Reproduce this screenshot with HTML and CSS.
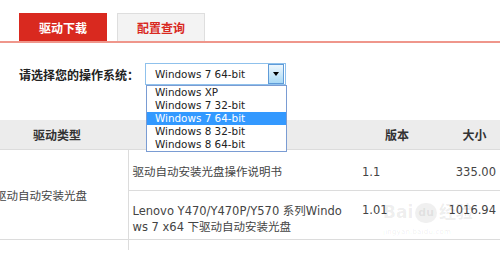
FILE: index.html
```html
<!DOCTYPE html>
<html lang="zh-CN">
<head>
    <meta charset="UTF-8">
    <title>驱动下载</title>
    <link rel="stylesheet" href="styles.css">
</head>
<body>
    <div class="tabs">
        <div class="tab active">驱动下载</div>
        <div class="tab">配置查询</div>
    </div>

    <div class="os-row">
        <span class="os-label">请选择您的操作系统：</span>
        <div class="select">
            <span class="select-value">Windows 7 64-bit</span>
            <span class="select-btn"><span class="arrow"></span></span>
            <ul class="select-list">
                <li>Windows XP</li>
                <li>Windows 7 32-bit</li>
                <li class="selected">Windows 7 64-bit</li>
                <li>Windows 8 32-bit</li>
                <li>Windows 8 64-bit</li>
            </ul>
        </div>
    </div>

    <table class="drivers">
        <colgroup>
            <col class="c-type">
            <col class="c-name">
            <col class="c-ver">
            <col class="c-size">
        </colgroup>
        <thead>
            <tr>
                <th>驱动类型</th>
                <th></th>
                <th>版本</th>
                <th>大小</th>
            </tr>
        </thead>
        <tbody>
            <tr class="r1">
                <td class="type" rowspan="2">驱动自动安装光盘</td>
                <td class="name">驱动自动安装光盘操作说明书</td>
                <td class="ver">1.1</td>
                <td class="size">335.00</td>
            </tr>
            <tr class="r2">
                <td class="name">Lenovo Y470/Y470P/Y570 系列Windows 7 x64 下驱动自动安装光盘</td>
                <td class="ver">1.01</td>
                <td class="size">1016.94</td>
            </tr>
            <tr class="r3">
                <td class="type"></td>
                <td class="name"></td>
                <td></td>
                <td></td>
            </tr>
        </tbody>
    </table>

    <div class="watermark">
        <div class="wm-logo">Bai<span class="wm-paw">du</span>经验</div>
        <div class="wm-url">jingyan.baidu.com</div>
    </div>
</body>
</html>
```

FILE: styles.css
```css
body {
    margin: 0;
    font-family: "DejaVu Sans", "Noto Sans CJK SC", sans-serif;
    font-size: 12px;
    color: #333;
    background: #fff;
    width: 500px;
    height: 253px;
    overflow: hidden;
    position: relative;
}
.tabs {
    display: flex;
    align-items: flex-end;
    gap: 10px;
    padding: 13px 0 0 19px;
    border-bottom: 2px solid #ef968b;
}
.tab {
    width: 86px;
    height: 27px;
    line-height: 27px;
    text-align: center;
    font-family: "Noto Sans CJK SC", sans-serif;
    font-weight: bold;
    font-size: 12px;
    color: #d9291f;
    background: #f3f3f3;
    border: 1px solid #dedede;
    border-bottom: none;
}
.tab.active {
    height: 27px;
    background: #d9291f;
    border-color: #d9291f;
    color: #fff;
}
.os-row {
    display: flex;
    align-items: center;
    padding: 20px 0 0 19px;
}
.os-label {
    font-family: "Noto Sans CJK SC", sans-serif;
    font-weight: bold;
    font-size: 12px;
    color: #222;
    width: 126px;
}
.select {
    position: relative;
    width: 139px;
    height: 20px;
    border: 1px solid #8fc1ec;
    display: flex;
    align-items: center;
    justify-content: space-between;
    background: #fff;
}
.select-value {
    padding-left: 9px;
    font-size: 10.4px;
    color: #222;
}
.select-btn {
    width: 14px;
    height: 18px;
    margin-right: 1px;
    border: 1px solid #5f9bd8;
    background: linear-gradient(#eef7fd, #a9d9f5);
    display: flex;
    align-items: center;
    justify-content: center;
}
.arrow {
    width: 0;
    height: 0;
    border-left: 3px solid transparent;
    border-right: 3px solid transparent;
    border-top: 4px solid #000;
}
.select-list {
    position: absolute;
    top: 21px;
    left: 0;
    width: 139px;
    margin: 0;
    padding: 0;
    list-style: none;
    border: 1px solid #7a9cd3;
    background: #fff;
    z-index: 2;
}
.select-list li {
    height: 13px;
    line-height: 13px;
    padding-left: 8px;
    font-size: 10.4px;
    color: #222;
}
.select-list li.selected {
    background: #3399ff;
    color: #fff;
}
.drivers {
    margin: 35px 0 0 -14px;
    width: 524px;
    border-collapse: collapse;
    table-layout: fixed;
}
.c-type { width: 142px; }
.c-name { width: 227px; }
.c-ver { width: 84px; }
.c-size { width: 71px; }
.drivers th {
    height: 29px;
    padding: 0;
    background: #ececec;
    font-family: "Noto Sans CJK SC", sans-serif;
    font-weight: bold;
    font-size: 12px;
    color: #333;
    text-align: center;
    border-bottom: 1px solid #dcdcdc;
}
.drivers td {
    padding: 12px 7px 0;
    vertical-align: top;
    font-size: 11.5px;
    line-height: 16px;
    color: #444;
    border-bottom: 1px solid #dcdcdc;
}
.drivers td.type {
    vertical-align: middle;
    padding: 0 6px 0 9px;
    font-family: "Noto Sans CJK SC", sans-serif;
}
.drivers td.name {
    border-left: 1px solid #dcdcdc;
    padding-left: 4px;
    padding-right: 11px;
    word-break: break-all;
}
.drivers td.size {
    text-align: right;
    padding-right: 14px;
}
.r1 td { height: 26px; padding-top: 14px; }
.r1 td.type { height: auto; }
.r2 td { height: 37px; padding-top: 11px; }
.r2 td.name { padding-top: 12px; height: 36px; }
.r3 td { height: 10px; padding: 0; border-bottom: none; }
.watermark {
    position: absolute;
    left: 383px;
    top: 198px;
    color: rgba(0, 0, 0, 0.08);
    text-align: center;
    pointer-events: none;
}
.wm-logo {
    font-family: "DejaVu Sans", "Noto Sans CJK SC", sans-serif;
    font-size: 17px;
    font-weight: bold;
    line-height: 28px;
}
.wm-paw {
    display: inline-block;
    font-size: 11px;
    line-height: 20px;
    padding: 0 3px;
    margin: 0 2px;
    border-radius: 10px;
    background: rgba(0, 0, 0, 0.06);
    vertical-align: middle;
}
.wm-url {
    font-size: 7px;
    line-height: 12px;
    text-align: left;
    letter-spacing: 0.2px;
}
```
